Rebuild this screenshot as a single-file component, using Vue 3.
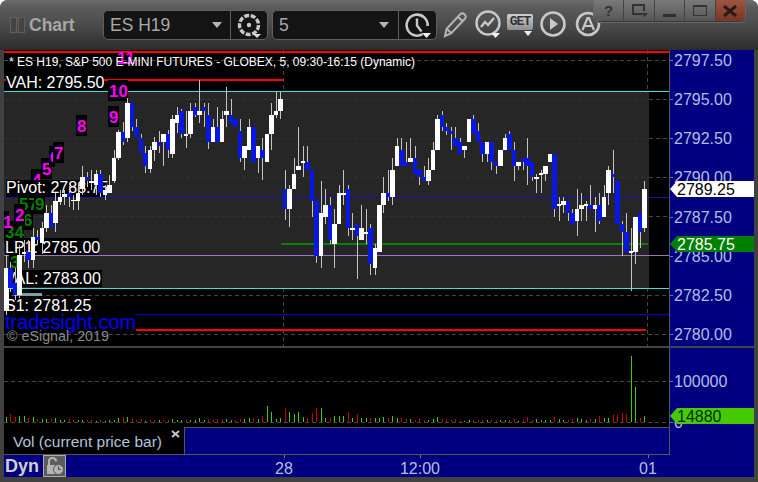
<script setup>
const raw = `w268 311 255 315,b268 288 262 292,b283 295 268 300,w255 295 245 298,w252 254 240 262,b252 260 240 268,w237 260 228 268,b237 240 230 245,w228 243 222 254,w213 228 205 232,b213 228 205 228,w201 223 193 232,w197 202 190 205,w194 197 190 205,b193 197 186 207,w200 201 195 210,w193 201 185 210,w177 189 166 195,b177 181 172 187,w181 183 170 190,w174 185 170 195,b174 193 170 197,w190 195 185 200,w185 193 175 193,w158 181 150 183,w132 158 130 160,b132 142 122 145,w103 138 98 142,b103 127 103 131,b127 137 119 137,b138 153 134 153,b153 166 146 173,w150 169 146 173,w142 150 137 161,b142 146 131 153,w134 142 134 166,b134 150 130 158,w119 154 115 158,w115 123 107 133,b111 134 109 138,w134 136 111 148,w111 134 103 138,b107 115 103 117,w111 115 80 123,b107 111 103 127,b115 142 103 149,w127 142 119 142,b127 142 107 142,w119 142 111 142,w111 115 87 127,b115 123 99 123,b119 127 119 127,b131 158 119 162,w146 158 146 170,w127 150 119 150,b127 162 127 162,w146 158 146 173,b150 158 138 180,w134 162 134 162,w115 134 103 150,w111 115 92 118,w99 111 92 119,b189 209 170 220,w189 209 185 227,w174 189 158 189,w166 170 127 170,w161 163 146 177,b162 170 146 170,b170 201 170 217,b201 256 201 263,w213 256 181 268,w205 217 189 224,b205 240 197 244,w224 244 209 268,w193 224 185 224,w193 195 170 205,b189 228 185 236,w228 230 213 240,b224 236 224 279,w228 240 205 240,w232 234 209 244,b228 264 224 275,w248 268 244 275,w205 252 205 252,w193 205 177 213,b193 197 170 201,w170 197 158 205,w146 166 138 166,b150 166 138 166,b162 166 142 166,w158 162 138 162,b158 174 146 174,b170 177 170 185,b177 181 166 181,w170 181 158 185,w150 170 142 170,w119 150 115 150,b115 127 111 131,b127 131 123 135,b131 134 127 150,b138 146 127 146,b142 154 138 154,w146 150 146 158,w119 142 119 142,b119 134 115 134,b131 142 123 142,b142 154 142 162,w142 154 142 162,b142 162 142 170,b162 166 162 174,w150 166 150 166,w138 150 134 150,b134 150 131 150,b150 166 142 181,w162 166 162 170,b158 162 158 170,b158 166 138 185,b162 177 162 181,w177 179 174 193,w173 175 170 193,w166 174 166 181,w154 162 154 162,b154 209 154 217,w204 206 197 221,w201 205 197 213,b201 213 201 221,b213 224 209 224,w209 221 189 236,w205 209 193 221,w204 206 201 221,b205 209 185 209,w205 209 197 232,b205 221 193 224,w197 217 185 217,w170 193 166 205,b174 177 150 193,b181 224 181 224,b224 232 221 256,b232 252 213 252,w251 253 228 291,w217 252 217 264,b213 232 213 248,w189 228 181 232`
const xAt = (i) => 6 + 4.494 * i
const candles = raw.split(',').map((s, i) => {
  const [t, b, h, l] = s.slice(1).split(' ').map(Number)
  return { x: xAt(i), white: s[0] === 'w', t, b, h, l }
})
const volRaw = [5,-8,-5,6,6,-4,5,-3,3,3,-3,4,2,2,-3,-2,2,2,-2,-2,1,-2,1,2,2,4,-5,5,-3,-2,-3,1,-2,-2,2,-2,-2,3,2,2,-2,2,2,4,2,-3,-2,-3,-2,3,2,-2,-3,3,4,-4,3,-6,16,10,3,4,-14,10,8,10,5,-4,-9,-14,14,4,-4,6,6,6,-10,4,-8,4,4,-4,4,4,5,-4,6,4,-4,-3,3,-2,-3,-2,2,3,5,-3,-2,-2,-3,-1,1,2,-2,-2,-2,2,-2,-1,2,2,-2,-3,1,-2,-5,-2,3,2,2,2,-5,3,2,-2,-3,4,3,2,-3,3,-6,4,4,-7,-7,-9,-8,66,35,-4,6]
const vols = volRaw.map((v, i) => ({ x: xAt(i), h: Math.abs(v), up: v > 0 }))
const blackDashes = [60, 295, 334]
const greyDashes = [99, 138, 177, 216.5]
const priceTicks = [
  { y: 60, t: '2797.50' }, { y: 99, t: '2795.00' }, { y: 138, t: '2792.50' }, { y: 177, t: '2790.00' },
  { y: 216.5, t: '2787.50' }, { y: 256, t: '2785.00' }, { y: 295, t: '2782.50' }, { y: 334, t: '2780.00' }
].map((p) => ({ ...p, top: p.y - 50 }))
const tags = [
  { x: 6, y: 74, w: 98, b: 88, t: 'VAH: 2795.50' },
  { x: 6, y: 180, w: 100, b: 193, t: 'Pivot: 2788.75' },
  { x: 5, y: 238, w: 94, b: 253, t: 'LP1: 2785.00' },
  { x: 5, y: 270, w: 97, b: 284, t: 'VAL: 2783.00' },
  { x: 5, y: 297, w: 88, b: 311, t: 'S1: 2781.25' }
]
const nums = [
  { x: 10, y: 268, t: '3', c: '#008000', bw: 11 },
  { x: 5, y: 238, t: '34', c: '#008000', bw: 20 },
  { x: 23, y: 226, t: '6', c: '#008000', bw: 11 },
  { x: 19, y: 210, t: '57', c: '#008000', bw: 19 },
  { x: 35, y: 210, t: '9', c: '#008000', bw: 11 },
  { x: 3, y: 228, t: '1', c: '#ff00ff', bw: 7 },
  { x: 15, y: 221, t: '2', c: '#ff00ff', bw: 11 },
  { x: 32, y: 186, t: '4', c: '#ff00ff', bw: 10 },
  { x: 42, y: 175, t: '5', c: '#ff00ff', bw: 11 },
  { x: 50, y: 163, t: '6', c: '#ff00ff', bw: 6 },
  { x: 54, y: 159, t: '7', c: '#ff00ff', bw: 11 },
  { x: 77, y: 132, t: '8', c: '#ff00ff', bw: 11 },
  { x: 109, y: 123, t: '9', c: '#ff00ff', bw: 11 },
  { x: 109, y: 97, t: '10', c: '#ff00ff', bw: 20 }
]
const timeLabels = [{ x: 284, t: '28' }, { x: 420, t: '12:00' }, { x: 648, t: '01' }]
</script>

<template>
  <div class="win">
    <header class="head">
      <span class="grip"></span><span class="grip"></span>
      <span class="title">Chart</span>
      <div class="combo first">
        <div class="sel w1">ES H19<i class="caret"></i></div>
        <div class="ico">
          <svg width="34" height="28" viewBox="0 0 34 28"><circle cx="17" cy="14" r="9.5" fill="none" stroke="#c8c8c8" stroke-width="3.4" stroke-dasharray="5 1.6"/><circle cx="17" cy="14" r="2.2" fill="#c8c8c8"/><path d="M21 23h8l-4 4z" fill="#ddd"/></svg>
        </div>
      </div>
      <div class="combo second">
        <div class="sel w2">5<i class="caret far"></i></div>
        <div class="ico">
          <svg width="36" height="28" viewBox="0 0 36 28"><path d="M22.5 23.2A10.5 10.5 0 1 1 27.6 15" fill="none" stroke="#c8c8c8" stroke-width="2.6"/><path d="M17 7.5v7l4.5 6" fill="none" stroke="#c8c8c8" stroke-width="2.4"/><path d="M22 22h9l-4.5 5z" fill="#eee"/></svg>
        </div>
      </div>
      <svg class="tool pencil" width="27" height="28" viewBox="0 0 27 28"><path d="M3 25l1.5-7L18 3.5c1.5-1.4 3.5-1.2 4.7 0 1.3 1.3 1.3 3 0 4.5L9 22.5z M5 18l4.5 4.5 M16 6l5 4.5" fill="none" stroke="#b4b4b4" stroke-width="2"/></svg>
      <svg class="tool chartic" width="30" height="30" viewBox="0 0 30 30"><circle cx="14" cy="13" r="11.5" fill="none" stroke="#c8c8c8" stroke-width="2.4"/><path d="M7 17l4-5 3 3 6-7" fill="none" stroke="#c8c8c8" stroke-width="2.4"/><path d="M17 23h9l-4.500 5z" fill="#eee"/></svg>
      <span class="get">GET<i></i></span>
      <svg class="tool" width="28" height="28" viewBox="0 0 28 28"><circle cx="14" cy="13" r="11.500" fill="none" stroke="#c8c8c8" stroke-width="2.600"/><path d="M11 7l8 6-8 6z" fill="#c8c8c8"/></svg>
      <svg class="tool aic" width="28" height="28" viewBox="0 0 28 28"><circle cx="14" cy="13" r="11" fill="none" stroke="#c8c8c8" stroke-width="2.600"/><path d="M8.500 19l5-12h1.500l5 12M10.500 15h8" fill="none" stroke="#c8c8c8" stroke-width="2.200"/></svg>
    </header>

    <div class="winbtns">
      <span class="wb"><b class="q">?</b></span>
      <span class="wb"><svg width="20" height="16" viewBox="0 0 20 16"><path d="M13 11H4V2h11v6" fill="none" stroke="#333" stroke-width="2"/><path d="M12 10h7l-3.500 4z" fill="#333"/></svg></span>
      <span class="wb"><i class="min"></i></span>
      <span class="wb"><i class="max"></i></span>
      <span class="wb close"><svg width="16" height="12" viewBox="0 0 16 12"><path d="M2 1l12 10M14 1L2 11" stroke="#2a1a16" stroke-width="3"/></svg></span>
    </div>

    <div class="row price-row">
      <svg class="plot" width="665" height="296" viewBox="4 50 665 296" shape-rendering="crispEdges">
        <rect x="4" y="50" width="665" height="296" fill="#000"/>
        <rect x="4" y="92" width="645" height="196" fill="#262626"/>
        <line v-for="d in blackDashes" :key="d" x1="4" x2="669" :y1="d" :y2="d" class="dash"/>
        <template v-for="d in greyDashes" :key="d">
          <line x1="4" x2="649" :y1="d" :y2="d" class="dash faint"/>
          <line x1="649" x2="669" :y1="d" :y2="d" class="dash"/>
        </template>
        <line x1="283.5" x2="283.500" y1="50" y2="92" class="dash"/>
        <line x1="647" x2="647" y1="50" y2="92" class="dash"/>
        <line x1="647" x2="647" y1="288" y2="346" class="dash"/>
        <line x1="283.5" x2="283.500" y1="288" y2="346" class="dash"/>
        <rect x="4" y="51" width="665" height="2" fill="#ff0000"/>
        <rect x="4" y="79" width="279" height="2" fill="#ff0000"/>
        <rect x="4" y="91" width="665" height="1" fill="#40e0e0"/>
        <rect x="4" y="197" width="665" height="1" fill="#1414a8"/>
        <rect x="281" y="243" width="367" height="2" fill="#0a800a"/>
        <rect x="4" y="255" width="665" height="1" fill="#9a70c8"/>
        <rect x="4" y="288" width="665" height="1" fill="#40e0e0"/>
        <rect x="135" y="314" width="534" height="1" fill="#0000d0"/>
        <rect x="136" y="329" width="510" height="2" fill="#ff0000"/>
        <rect x="14" y="293" width="28" height="3" fill="#7aa0a0"/>

        <g shape-rendering="auto">
          <text x="126" y="64" class="num" fill="#ff00ff" text-anchor="middle">11</text>
          <text x="9" y="66" class="sym">* ES H19, S&amp;P 500 E-MINI FUTURES - GLOBEX, 5, 09:30-16:15 (Dynamic)</text>
          <g v-for="n in nums" :key="n.t + n.x">
            <rect :x="n.x - 1" :y="n.y - 17" :width="n.bw" height="21" fill="#000" shape-rendering="crispEdges"/>
            <text :x="n.x" :y="n.y" class="num" :fill="n.c">{{ n.t }}</text>
          </g>
          <g v-for="t in tags" :key="t.t">
            <rect :x="t.x" :y="t.y" :width="t.w" height="17" fill="#000" shape-rendering="crispEdges"/>
            <text :x="t.x" :y="t.b" class="tag">{{ t.t }}</text>
          </g>
        </g>

        <g v-for="(c, i) in candles" :key="i">
          <rect :x="Math.round(c.x)" :y="c.h" width="1" :height="c.l - c.h" fill="#c4c4c4"/>
        </g>
        <rect v-for="(c, i) in candles" :key="'b' + i" :x="c.x - 2" :y="c.t" width="4.500" :height="c.b - c.t" :fill="c.white ? '#ffffff' : '#0816e6'"/>

        <g shape-rendering="auto">
          <text x="5" y="329" class="brand">tradesight.com</text>
          <text x="7" y="341" class="copy">© eSignal, 2019</text>
        </g>
      </svg>
      <div class="axis">
        <div v-for="p in priceTicks" :key="p.t" class="tick" :style="{ top: p.top + 'px' }"><i></i>{{ p.t }}</div>
        <div class="tagflag white" style="top: 131px">2789.25</div>
        <div class="tagflag green" style="top: 186px">2785.75</div>
      </div>
    </div>

    <div class="sep"></div>

    <div class="row lower-row">
      <div class="lower-left">
        <svg class="vol" width="665" height="79" viewBox="4 348 665 79" shape-rendering="crispEdges">
          <rect x="4" y="348" width="665" height="79" fill="#000"/>
          <line x1="4" x2="669" y1="381" y2="381" class="dash"/>
          <line x1="4" x2="669" y1="422.500" y2="422.500" class="dash"/>
          <rect v-for="(v, i) in vols" :key="i" :x="Math.round(v.x)" :y="422 - v.h" width="1" :height="v.h" :fill="v.up ? '#44cc00' : '#d00000'"/>
        </svg>
        <div class="tabrow">
          <div class="tab">
            <span>Vol (current price bar)</span>
            <svg class="xclose" width="9" height="8" viewBox="0 0 9 8"><path d="M1 1l7 6M8 1L1 7" stroke="#c8c8c8" stroke-width="2"/></svg>
          </div>
          <div class="tabfill"></div>
        </div>
      </div>
      <div class="axis low">
        <div class="tick" style="top: 33px"><i></i>100000</div>
        <div class="tick" style="top: 74px"><i></i>0</div>
        <div class="tagflag lime" style="top: 60px">14880</div>
      </div>
    </div>

    <div class="timerow">
      <span class="dyn">Dyn</span>
      <span class="lock">
        <svg width="20" height="20" viewBox="0 0 20 20"><path d="M4 9V5.500C4 3 5.500 2 7.500 2S11 3 11 5.500" fill="none" stroke="#b4b4b4" stroke-width="2"/><rect x="2" y="9" width="10" height="9" fill="#b4b4b4"/><circle cx="13.500" cy="13.500" r="5" fill="#b4b4b4" stroke="#555"/><path d="M13.500 10.500v3h2.500" fill="none" stroke="#555" stroke-width="1.200"/></svg>
      </span>
      <template v-for="t in timeLabels" :key="t.t">
        <i class="tmark" :style="{ left: t.x - 4 + 'px' }"></i>
        <span class="tlabel" :style="{ left: t.x - 34 + 'px' }">{{ t.t }}</span>
      </template>
    </div>
  </div>
</template>

<style>
html, body { margin: 0; background: #fff; }
</style>

<style scoped>
.win {
  position: relative;
  width: 758px;
  height: 482px;
  box-sizing: border-box;
  padding: 0 4px 4px;
  background: #414141;
  border-radius: 8px 8px 0 0;
  overflow: hidden;
  font-family: "Liberation Sans", Arial, sans-serif;
  display: flex;
  flex-direction: column;
}
.head {
  height: 50px;
  margin: 0 -4px;
  padding-left: 10px;
  flex: none;
  display: flex;
  align-items: center;
  background: linear-gradient(#6c6c6c 0, #5a5a5a 8px, #4a4a4a 26px, #2c2c2c 50px);
}
.grip {
  width: 5px;
  height: 14px;
  border: 1px solid #5f5f5f;
  background: #444;
  margin-right: 1px;
}
.title {
  margin-left: 3px;
  width: 47px;
  font-size: 17.500px;
  font-weight: bold;
  color: #a6a6a6;
}
.combo {
  display: flex;
  height: 28px;
  border: 1px solid #5e5e5e;
  border-radius: 5px;
  background: #141414;
  overflow: hidden;
}
.first { margin-left: 27px; width: 163px; }
.second { margin-left: 4px; width: 163px; }
.sel {
  position: relative;
  box-sizing: border-box;
  font-size: 17.500px;
  line-height: 28px;
  color: #a8a8a8;
  padding-left: 6px;
  border-right: 1px solid #5e5e5e;
}
.w1 { width: 127px; }
.w2 { width: 126px; }
.caret {
  position: absolute;
  left: 108px;
  top: 11px;
  border: 5px solid transparent;
  border-top: 6px solid #b4b4b4;
  border-bottom: 0;
}
.far { left: 106px; }
.ico { flex: 1; display: flex; align-items: center; justify-content: center; }
.tool { flex: none; margin-left: 6px; }
.pencil { margin-left: 5px; }
.chartic { margin-left: 5px; }
.aic { margin-left: 7px; }
.get {
  position: relative;
  flex: none;
  box-sizing: border-box;
  width: 26px;
  height: 16px;
  margin: -6px 0 0 3px;
  background: linear-gradient(#d0d0d0, #8e8e8e);
  border-radius: 2px;
  color: #333;
  font: bold 13px/16px "Liberation Mono", monospace;
  text-align: center;
  letter-spacing: -1px;
}
.get i {
  position: absolute;
  right: 1px;
  top: 17px;
  border: 4.500px solid transparent;
  border-top: 5px solid #eee;
  border-bottom: 0;
}
.winbtns {
  position: absolute;
  right: 13px;
  top: 0;
  width: 151px;
  height: 21px;
  display: flex;
  border-radius: 0 0 5px 5px;
  overflow: hidden;
  border-bottom: 1px solid #3a3a3a;
  box-shadow: 0 0 0 1px #666;
}
.wb {
  flex: 1;
  display: flex;
  align-items: center;
  justify-content: center;
  background: linear-gradient(#7a7a7a, #565656);
  border-right: 1px solid #444;
}
.q { font: bold 15px "Liberation Sans", sans-serif; color: #333; }
.min { width: 13px; height: 3px; margin-top: 9px; background: #2e2e2e; }
.max { box-sizing: border-box; width: 14px; height: 11px; border: 1px solid #333; border-top-width: 2px; }
.close { background: linear-gradient(#a0543f, #7a3527); border-right: 0; }
.row { display: flex; flex: none; }
.price-row { height: 296px; }
.lower-row { height: 107px; }
.plot, .vol { display: block; flex: none; }
.plot { border-right: 1px solid #555; }
.dash { stroke: #444; stroke-dasharray: 4 3; stroke-width: 1; }
.faint { stroke: #313131; }
.sym { font-size: 12px; fill: #fff; }
.tag { font-size: 16px; fill: #fff; }
.num { font-size: 17px; font-weight: bold; }
.brand { font-size: 20px; fill: #0000ff; }
.copy { font-size: 14.300px; fill: #8a8a8a; }
.axis {
  position: relative;
  flex: 1;
  background: #000080;
  overflow: hidden;
}
.tick {
  position: absolute;
  left: 4px;
  font-size: 16px;
  line-height: 18px;
  margin-top: -8px;
  color: #b4bde2;
}
.tick i {
  position: absolute;
  left: -4px;
  top: 8px;
  width: 3px;
  height: 1px;
  background: #777;
}
.tagflag {
  position: absolute;
  left: 0;
  right: 0;
  height: 16px;
  padding-left: 7px;
  font-size: 16px;
  line-height: 17px;
  clip-path: polygon(0 50%, 7px 0, 100% 0, 100% 100%, 7px 100%);
}
.white { background: #fff; color: #000; }
.green { background: #008000; color: #fff; }
.lime { background: #44cc00; color: #0c2a00; }
.sep { height: 2px; background: #444; flex: none; }
.lower-left { width: 666px; flex: none; }
.vol { border-right: 1px solid #555; }
.tabrow { display: flex; height: 28px; }
.tab {
  position: relative;
  width: 180px;
  background: #000;
  border-bottom: 1px solid #555;
  box-sizing: border-box;
  padding: 6px 0 0 9px;
  font-size: 15.500px;
  color: #b4c2da;
}
.xclose { position: absolute; right: 4px; top: 3px; }
.tabfill {
  flex: 1;
  box-sizing: border-box;
  background: #000080;
  border: 1px solid #555;
}
.timerow {
  position: relative;
  flex: none;
  height: 22px;
  background: #000080;
  display: flex;
  align-items: center;
}
.dyn {
  width: 39px;
  padding-left: 1px;
  box-sizing: border-box;
  font-size: 18px;
  font-weight: bold;
  color: #d0d0d0;
}
.lock {
  box-sizing: border-box;
  width: 23px;
  height: 22px;
  background: #5c5c5c;
  border: 1px solid #aaa;
  display: flex;
  align-items: center;
  justify-content: center;
}
.tmark { position: absolute; top: 0; width: 1px; height: 3px; background: #777; }
.tlabel {
  position: absolute;
  top: 4px;
  width: 60px;
  text-align: center;
  font-size: 16px;
  line-height: 20px;
  color: #b4bde2;
}
</style>
